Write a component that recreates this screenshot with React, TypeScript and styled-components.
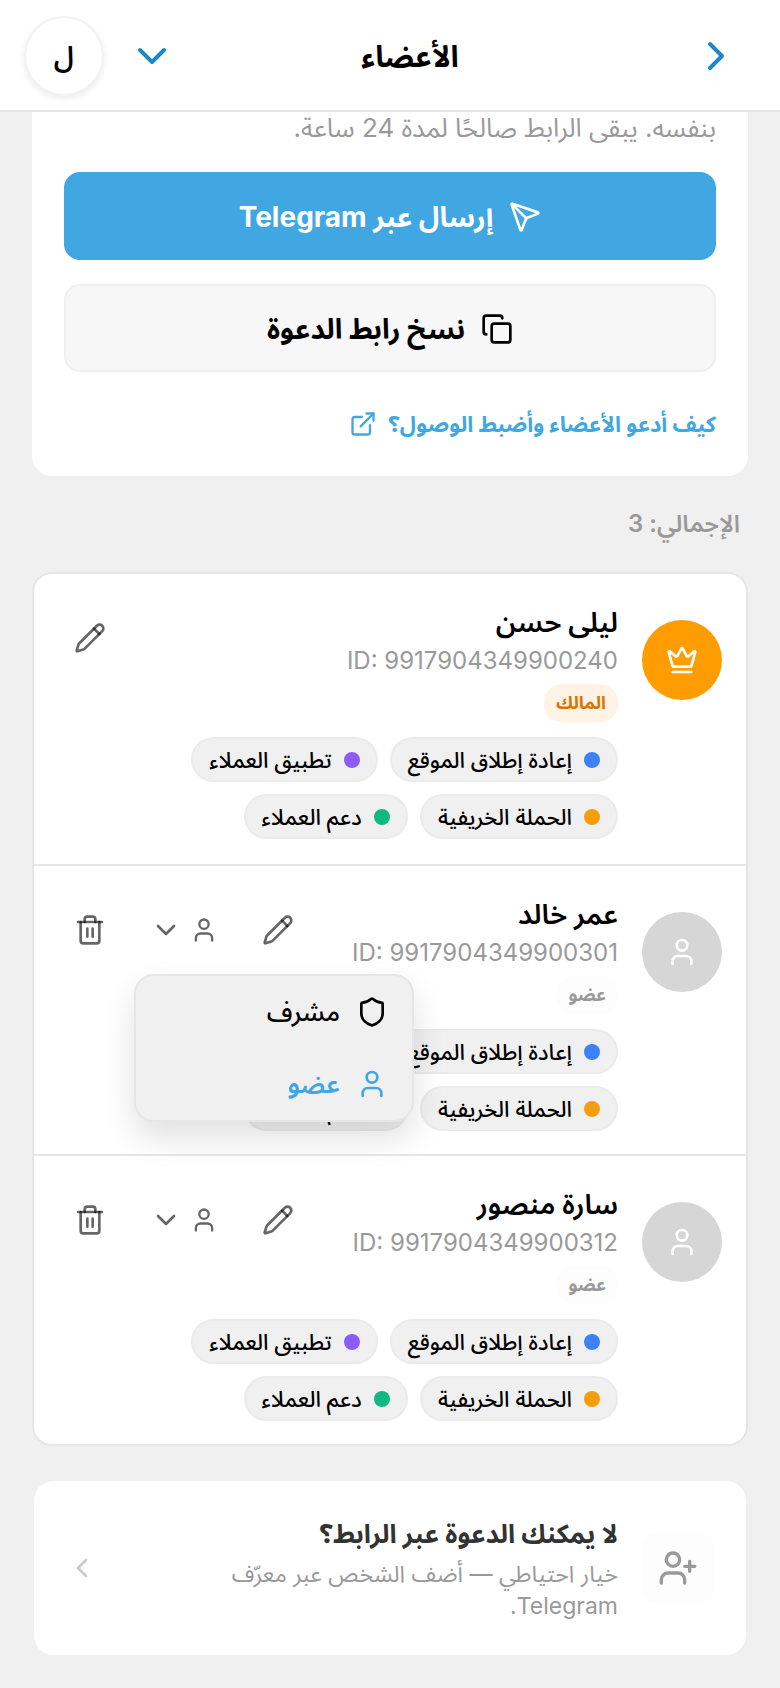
import React from 'react';
import styled, { createGlobalStyle, css } from 'styled-components';
import {
  ChevronDown,
  ChevronLeft,
  ChevronRight,
  Copy,
  Crown,
  ExternalLink,
  Pencil,
  Send,
  Shield,
  Trash2,
  User,
  UserPlus,
} from 'lucide-react';

const GlobalStyle = createGlobalStyle`
  *, *::before, *::after { box-sizing: border-box; }
  body {
    margin: 0;
    background: #f0f0f0;
    color: #000;
    font-family: Inter, 'Noto Sans Arabic', 'Noto Sans', sans-serif;
  }
  button { font: inherit; color: inherit; cursor: pointer; }
  h1, h2, p, ul { margin: 0; padding: 0; }
  ul { list-style: none; }
  svg { display: block; flex: none; }
`;

const Page = styled.div`
  min-height: 100vh;
  background: #f0f0f0;
`;

const Header = styled.header`
  position: sticky;
  top: 0;
  z-index: 10;
  display: flex;
  align-items: center;
  height: 112px;
  padding: 2px 40px 0 24px;
  background: #fff;
  border-bottom: 2px solid #e6e6e6;
`;

const Title = styled.h1`
  flex: 1;
  text-align: center;
  font-size: 30px;
  line-height: 40px;
  font-weight: 700;
`;

const HeaderButton = styled.button<{ $wide?: boolean }>`
  display: flex;
  width: ${(p) => (p.$wide ? 96 : 48)}px;
  height: 48px;
  padding: 0;
  border: 0;
  background: none;
  color: #1c87c9;
`;

const HeaderEnd = styled.div`
  display: flex;
  align-items: center;
  gap: 24px;
`;

const Account = styled.button`
  width: 80px;
  height: 80px;
  padding: 0;
  border: 2px solid #f2f2f2;
  border-radius: 50%;
  background: #fff;
  box-shadow: 0 3px 6px rgba(0, 0, 0, 0.08);
  font-size: 28px;
  line-height: 40px;
  font-weight: 600;
`;

const Main = styled.main`
  display: flex;
  flex-direction: column;
  padding: 0 32px 32px;
`;

const Invite = styled.section`
  display: flex;
  flex-direction: column;
  padding: 0 32px 36px;
  background: #fff;
  border-radius: 0 0 20px 20px;
`;

const InviteHint = styled.p`
  margin-bottom: 28px;
  color: #999;
  font-size: 26px;
  line-height: 32px;
`;

const Action = styled.button<{ $primary?: boolean }>`
  display: flex;
  align-items: center;
  justify-content: center;
  gap: 16px;
  height: 88px;
  padding-top: 2px;
  border-radius: 16px;
  font-size: 28px;
  line-height: 40px;
  font-weight: 700;
  ${(p) =>
    p.$primary
      ? css`
          margin-bottom: 24px;
          border: 0;
          background: #40a7e3;
          color: #fff;
        `
      : css`
          border: 2px solid #efefef;
          background: #f7f7f7;
        `}
`;

const SendIcon = styled(Send)`
  transform: scaleX(-1);
`;

const HelpLink = styled.a`
  display: flex;
  align-self: flex-start;
  align-items: center;
  gap: 12px;
  margin-top: 36px;
  color: #40a7e3;
  font-size: 22px;
  line-height: 32px;
  font-weight: 700;
  text-decoration: none;
`;

const Total = styled.h2`
  margin: 32px 8px;
  color: #999;
  font-size: 24px;
  line-height: 32px;
  font-weight: 600;
`;

const MemberList = styled.ul`
  background: #fff;
  border: 2px solid #e6e6e6;
  border-radius: 20px;
`;

const MemberRow = styled.li`
  display: flex;
  align-items: flex-start;
  gap: 24px;
  min-height: 290px;
  padding: 28px 24px 22px;

  & + & {
    border-top: 2px solid #e6e6e6;
  }
`;

const Avatar = styled.div<{ $owner?: boolean }>`
  display: flex;
  flex: none;
  align-items: center;
  justify-content: center;
  width: 80px;
  height: 80px;
  margin-top: 18px;
  border-radius: 50%;
  background: ${(p) => (p.$owner ? '#ff9c00' : '#d6d6d6')};
  color: #fff;
`;

const MemberBody = styled.div`
  flex: 1;
  min-width: 0;
`;

const MemberTop = styled.div`
  display: flex;
  align-items: flex-start;
  justify-content: space-between;
`;

const Name = styled.p`
  font-size: 28px;
  line-height: 40px;
  font-weight: 650;
`;

const Identifier = styled.p`
  color: #999;
  font-size: 24px;
  line-height: 38px;
`;

const Badge = styled.span<{ $owner?: boolean }>`
  display: inline-block;
  margin-top: 4px;
  padding: 0 12px;
  border-radius: 18px;
  background: ${(p) => (p.$owner ? '#fff3e5' : '#fdfdfd')};
  color: ${(p) => (p.$owner ? '#d97706' : '#999')};
  font-size: 18px;
  line-height: 38px;
  font-weight: 700;
  vertical-align: top;
`;

const Tools = styled.div`
  display: flex;
  gap: 8px;
  margin-top: 4px;
  color: rgba(0, 0, 0, 0.6);
`;

const ToolButton = styled.button<{ $wide?: boolean }>`
  display: flex;
  align-items: center;
  justify-content: center;
  gap: 8px;
  width: ${(p) => (p.$wide ? 108 : 64)}px;
  height: 64px;
  padding: 0;
  border: 0;
  background: none;
`;

const RolePicker = styled.div`
  position: relative;
`;

const Menu = styled.div`
  position: absolute;
  z-index: 5;
  top: calc(100% + 12px);
  left: 4px;
  width: 280px;
  border: 2px solid #e6e6e6;
  border-radius: 20px;
  background: #f0f0f0;
  box-shadow: 0 16px 32px rgba(0, 0, 0, 0.12);
`;

const MenuItem = styled.button<{ $selected?: boolean }>`
  display: flex;
  align-items: center;
  gap: 16px;
  width: 100%;
  height: 72px;
  padding: 0 24px;
  border: 0;
  background: none;
  color: ${(p) => (p.$selected ? '#40a7e3' : '#000')};
  font-size: 26px;
  line-height: 40px;
  font-weight: ${(p) => (p.$selected ? 600 : 500)};
`;

const Projects = styled.ul`
  display: flex;
  flex-wrap: wrap;
  gap: 12px;
  margin-top: 15px;
`;

const Project = styled.li`
  display: flex;
  align-items: center;
  gap: 12px;
  height: 45px;
  padding: 0 16px;
  border: 2px solid #ebebeb;
  border-radius: 23px;
  background: #f0f0f0;
  font-size: 22px;
  line-height: 32px;
  font-weight: 525;
`;

const Dot = styled.span<{ $color: string }>`
  width: 16px;
  height: 16px;
  border-radius: 50%;
  background: ${(p) => p.$color};
`;

const Fallback = styled.button`
  display: flex;
  align-items: center;
  gap: 24px;
  min-height: 174px;
  margin: 35px 2px 0;
  padding: 32px;
  border: 0;
  border-radius: 20px;
  background: #fff;
  text-align: start;
`;

const FallbackIcon = styled.span`
  display: flex;
  flex: none;
  align-items: center;
  justify-content: center;
  width: 72px;
  height: 72px;
  border-radius: 16px;
  background: #fdfdfd;
  color: #999;
`;

const FallbackText = styled.span`
  display: flex;
  flex: 1;
  flex-direction: column;
  gap: 4px;
`;

const FallbackTitle = styled.span`
  color: #333;
  font-size: 26px;
  line-height: 40px;
  font-weight: 700;
`;

const FallbackNote = styled.span`
  color: #999;
  font-size: 23px;
  line-height: 32px;
`;

const FallbackArrow = styled.span`
  color: #ccc;
`;

const projects = [
  { name: 'إعادة إطلاق الموقع', color: '#3b82f6' },
  { name: 'تطبيق العملاء', color: '#8b5cf6' },
  { name: 'الحملة الخريفية', color: '#f59e0b' },
  { name: 'دعم العملاء', color: '#10b981' },
];

interface Member {
  name: string;
  id: string;
  owner?: boolean;
  menuOpen?: boolean;
}

const members: Member[] = [
  { name: 'ليلى حسن', id: '9917904349900240', owner: true },
  { name: 'عمر خالد', id: '9917904349900301', menuOpen: true },
  { name: 'سارة منصور', id: '9917904349900312' },
];

function MemberItem({ name, id, owner, menuOpen }: Member) {
  return (
    <MemberRow>
      <Avatar $owner={owner}>{owner ? <Crown size={32} /> : <User size={32} />}</Avatar>
      <MemberBody>
        <MemberTop>
          <div>
            <Name>{name}</Name>
            <Identifier dir="ltr">ID: {id}</Identifier>
            <Badge $owner={owner}>{owner ? 'المالك' : 'عضو'}</Badge>
          </div>
          <Tools>
            <ToolButton type="button" aria-label="تعديل">
              <Pencil size={32} />
            </ToolButton>
            {!owner && (
              <>
                <RolePicker>
                  <ToolButton type="button" $wide aria-label="الدور" aria-haspopup="menu" aria-expanded={!!menuOpen}>
                    <User size={28} />
                    <ChevronDown size={32} />
                  </ToolButton>
                  {menuOpen && (
                    <Menu role="menu">
                      <MenuItem type="button" role="menuitem">
                        <Shield size={32} />
                        مشرف
                      </MenuItem>
                      <MenuItem type="button" role="menuitem" $selected>
                        <User size={32} />
                        عضو
                      </MenuItem>
                    </Menu>
                  )}
                </RolePicker>
                <ToolButton type="button" aria-label="حذف">
                  <Trash2 size={32} />
                </ToolButton>
              </>
            )}
          </Tools>
        </MemberTop>
        <Projects>
          {projects.map((project) => (
            <Project key={project.name}>
              <Dot $color={project.color} />
              {project.name}
            </Project>
          ))}
        </Projects>
      </MemberBody>
    </MemberRow>
  );
}

export default function App() {
  return (
    <Page dir="rtl" lang="ar">
      <GlobalStyle />
      <Header>
        <HeaderButton type="button" $wide aria-label="رجوع">
          <ChevronRight size={48} />
        </HeaderButton>
        <Title>الأعضاء</Title>
        <HeaderEnd>
          <HeaderButton type="button" aria-label="المزيد">
            <ChevronDown size={48} />
          </HeaderButton>
          <Account type="button">ل</Account>
        </HeaderEnd>
      </Header>
      <Main>
        <Invite>
          <InviteHint>بنفسه. يبقى الرابط صالحًا لمدة 24 ساعة.</InviteHint>
          <Action type="button" $primary>
            <SendIcon size={32} />
            إرسال عبر Telegram
          </Action>
          <Action type="button">
            <Copy size={32} />
            نسخ رابط الدعوة
          </Action>
          <HelpLink href="#help">
            كيف أدعو الأعضاء وأضبط الوصول؟
            <ExternalLink size={28} />
          </HelpLink>
        </Invite>
        <Total>الإجمالي: 3</Total>
        <MemberList>
          {members.map((member) => (
            <MemberItem key={member.id} {...member} />
          ))}
        </MemberList>
        <Fallback type="button">
          <FallbackIcon>
            <UserPlus size={40} />
          </FallbackIcon>
          <FallbackText>
            <FallbackTitle>لا يمكنك الدعوة عبر الرابط؟</FallbackTitle>
            <FallbackNote>خيار احتياطي — أضف الشخص عبر معرّف Telegram.</FallbackNote>
          </FallbackText>
          <FallbackArrow>
            <ChevronLeft size={32} />
          </FallbackArrow>
        </Fallback>
      </Main>
    </Page>
  );
}
